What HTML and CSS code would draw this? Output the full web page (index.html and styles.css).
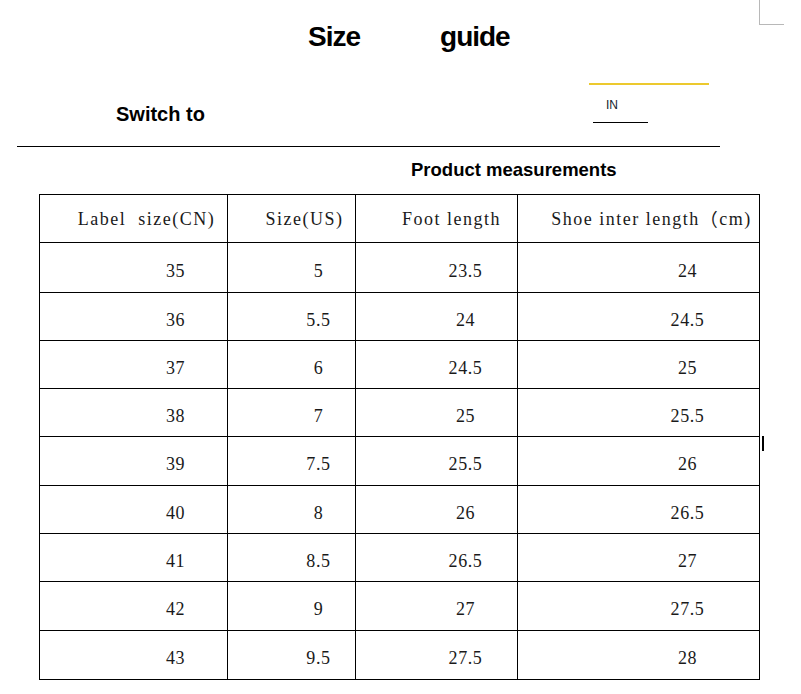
FILE: index.html
```html
<!DOCTYPE html>
<html lang="en">
<head>
<meta charset="utf-8">
<title>Size guide</title>
<link rel="stylesheet" href="styles.css">
</head>
<body>
<div class="page">
  <div class="corner"></div>
  <h1 class="title"><span>Size</span><span>guide</span></h1>
  <div class="switch-row">
    <div class="switch-label">Switch to</div>
    <div class="unit-box">
      <div class="unit-top"></div>
      <div class="unit-text">IN</div>
      <div class="unit-line"></div>
    </div>
  </div>
  <div class="rule"></div>
  <h2 class="subtitle">Product measurements</h2>
  <div class="table">
    <div class="th c1">Label  size(CN)</div>
    <div class="th c2">Size(US)</div>
    <div class="th c3">Foot length</div>
    <div class="th c4">Shoe inter length<span class="fw">（</span>cm)</div>

    <div class="td c1">35</div><div class="td c2">5</div><div class="td c3">23.5</div><div class="td c4">24</div>
    <div class="td c1">36</div><div class="td c2">5.5</div><div class="td c3">24</div><div class="td c4">24.5</div>
    <div class="td c1">37</div><div class="td c2">6</div><div class="td c3">24.5</div><div class="td c4">25</div>
    <div class="td c1">38</div><div class="td c2">7</div><div class="td c3">25</div><div class="td c4">25.5</div>
    <div class="td c1">39</div><div class="td c2">7.5</div><div class="td c3">25.5</div><div class="td c4">26</div>
    <div class="td c1">40</div><div class="td c2">8</div><div class="td c3">26</div><div class="td c4">26.5</div>
    <div class="td c1">41</div><div class="td c2">8.5</div><div class="td c3">26.5</div><div class="td c4">27</div>
    <div class="td c1">42</div><div class="td c2">9</div><div class="td c3">27</div><div class="td c4">27.5</div>
    <div class="td c1">43</div><div class="td c2">9.5</div><div class="td c3">27.5</div><div class="td c4">28</div>
    <div class="caret"></div>
  </div>
</div>
</body>
</html>
```

FILE: styles.css
```css
html, body {
  margin: 0;
  padding: 0;
  background: #ffffff;
}

.page {
  position: relative;
  width: 801px;
  height: 694px;
  overflow: hidden;
  font-family: "Liberation Sans", Arial, sans-serif;
  color: #000;
}

.corner {
  position: absolute;
  left: 759px;
  top: 0;
  width: 24px;
  height: 24px;
  border-left: 1px solid #b8b8b8;
  border-bottom: 1px solid #b8b8b8;
}

.title {
  margin: 21px 0 0 0;
  padding-left: 308px;
  display: flex;
  gap: 80px;
  font-size: 28px;
  line-height: 32px;
  font-weight: bold;
  letter-spacing: -1px;
}

.switch-row {
  margin-top: 30px;
  height: 63px;
  display: flex;
  align-items: flex-start;
}

.switch-label {
  width: 473px;
  padding-left: 116px;
  padding-top: 20px;
  font-size: 20px;
  line-height: 23px;
  font-weight: bold;
}

.unit-box {
  width: 120px;
}

.unit-top {
  height: 2px;
  background: #ecc92e;
}

.unit-text {
  margin-top: 13px;
  padding-left: 17px;
  font-size: 12px;
  line-height: 14px;
  color: #141a2a;
}

.unit-line {
  margin-top: 10px;
  margin-left: 4px;
  width: 55px;
  height: 1px;
  background: #000;
}

.rule {
  margin-left: 17px;
  width: 703px;
  height: 1px;
  background: #000;
}

.subtitle {
  margin: 12px 0 0 0;
  padding-left: 411px;
  font-size: 18.5px;
  line-height: 21px;
  font-weight: bold;
}

.table {
  position: relative;
  margin-top: 14px;
  margin-left: 39px;
  width: 720px;
  display: grid;
  grid-template-columns: 188px 128px 162px 242px;
  grid-template-rows: 48px 50px 48px 48px 48px 49px 48px 48px 49px 49px;
  border-left: 1px solid #000;
  border-top: 1px solid #000;
  font-family: "Liberation Serif", "Noto Sans CJK SC", serif;
  font-size: 18px;
  color: #1a1a1a;
}

.th, .td {
  border-right: 1px solid #000;
  border-bottom: 1px solid #000;
  display: flex;
  align-items: center;
  justify-content: center;
  white-space: pre;
}

.th {
  padding-top: 2px;
  letter-spacing: 1.5px;
}

.fw {
  position: relative;
  top: -2px;
}

.td {
  padding-top: 7px;
  letter-spacing: 0.6px;
}

.th.c1 { padding-left: 26px; }
.th.c2 { padding-left: 26px; }
.th.c3 { padding-left: 30px; }
.th.c4 { padding-left: 26px; }

.td.c1 { padding-left: 84px; }
.td.c2 { padding-left: 54px; }
.td.c3 { padding-left: 58px; }
.td.c4 { padding-left: 98px; }

.caret {
  position: absolute;
  left: 722px;
  top: 241px;
  width: 2px;
  height: 15px;
  background: #000;
}
```
